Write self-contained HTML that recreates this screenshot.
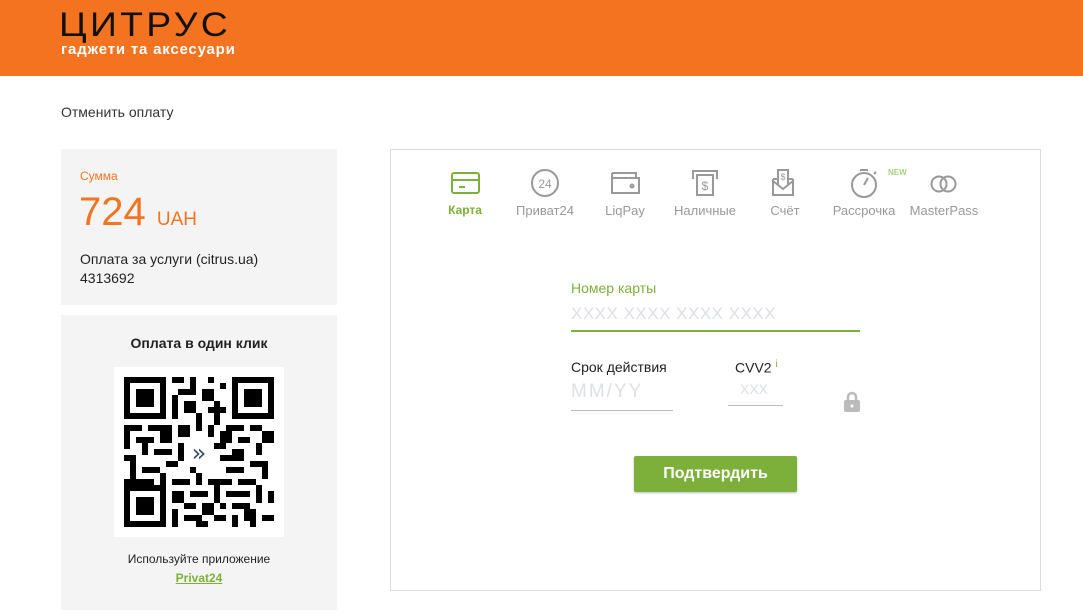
<!DOCTYPE html>
<html><head><meta charset="utf-8"><style>
body{margin:0;width:1083px;height:615px;background:#fff;font-family:"Liberation Sans","DejaVu Sans",sans-serif;position:relative;overflow:hidden;color:#222}
.hdr{position:absolute;left:0;top:0;width:1083px;height:76px;background:#f47321}
.a{position:absolute;white-space:nowrap}
.card{position:absolute;background:#f4f4f4}
.lab{position:absolute;top:203px;font-size:13px;color:#999;width:90px;text-align:center}
</style></head><body>
<div class="hdr"></div>
<div class="a" style="left:59px;top:6px;font-size:34px;letter-spacing:3px;color:#111;transform:scaleX(1.1);transform-origin:left">ЦИТРУС</div>
<div class="a" style="left:61px;top:41px;font-size:15px;color:#fff;font-weight:bold;letter-spacing:0.8px">гаджети та аксесуари</div>
<div class="a" style="left:61px;top:104px;font-size:14px;color:#333">Отменить оплату</div>

<div class="card" style="left:61px;top:149px;width:276px;height:156px"></div>
<div class="a" style="left:80px;top:169px;font-size:12px;color:#f47321">Сумма</div>
<div class="a" style="left:79px;top:190px;font-size:40px;color:#f47321">724 <span style="font-size:19px">UAH</span></div>
<div class="a" style="left:80px;top:250px;font-size:14px;color:#222;line-height:19px">Оплата за услуги (citrus.ua)<br>4313692</div>

<div class="card" style="left:61px;top:315px;width:276px;height:295px"></div>
<div class="a" style="left:61px;width:276px;text-align:center;top:335px;font-size:14px;font-weight:bold;color:#222">Оплата в один клик</div>
<div class="a" style="left:114px;top:367px;width:170px;height:170px;background:#fff"></div>
<svg class="a" style="left:124px;top:377px" width="150" height="150" viewBox="0 0 25 25" shape-rendering="crispEdges">
<g fill="#000">
<path d="M0 0h7v7h-7zM1 1v5h5v-5zM2 2h3v3h-3z" fill-rule="evenodd"/>
<path d="M18 0h7v7h-7zM19 1v5h5v-5zM20 2h3v3h-3z" fill-rule="evenodd"/>
<path d="M0 18h7v7h-7zM1 19v5h5v-5zM2 20h3v3h-3z" fill-rule="evenodd"/>
<rect x="8" y="0" width="2" height="1"/><rect x="11" y="0" width="1" height="2"/><rect x="14" y="0" width="1" height="1"/><rect x="16" y="1" width="1" height="1"/>
<rect x="9" y="2" width="3" height="1"/><rect x="13" y="2" width="2" height="2"/><rect x="8" y="3" width="1" height="4"/><rect x="10" y="4" width="2" height="2"/><rect x="14" y="5" width="3" height="1"/><rect x="12" y="6" width="1" height="3"/><rect x="15" y="4" width="1" height="4"/>
<rect x="0" y="8" width="3" height="1"/><rect x="4" y="8" width="4" height="1"/><rect x="9" y="8" width="2" height="2"/><rect x="14" y="8" width="1" height="2"/><rect x="17" y="8" width="3" height="1"/><rect x="21" y="8" width="2" height="1"/>
<rect x="0" y="9" width="1" height="3"/><rect x="2" y="10" width="3" height="1"/><rect x="6" y="9" width="2" height="2"/><rect x="10" y="10" width="3" height="1"/><rect x="16" y="9" width="2" height="2"/><rect x="19" y="10" width="2" height="1"/><rect x="23" y="9" width="2" height="2"/>
<rect x="3" y="11" width="1" height="2"/><rect x="5" y="12" width="3" height="1"/><rect x="9" y="11" width="1" height="3"/><rect x="11" y="12" width="2" height="1"/><rect x="14" y="11" width="3" height="1"/><rect x="18" y="12" width="2" height="1"/><rect x="22" y="11" width="1" height="2"/>
<rect x="0" y="13" width="2" height="1"/><rect x="11" y="13" width="1" height="3"/><rect x="13" y="13" width="1" height="1"/><rect x="16" y="13" width="4" height="1"/><rect x="21" y="14" width="3" height="1"/>
<rect x="1" y="14" width="1" height="3"/><rect x="3" y="15" width="3" height="1"/><rect x="7" y="14" width="2" height="1"/><rect x="17" y="15" width="3" height="1"/><rect x="23" y="15" width="1" height="2"/>
<rect x="0" y="17" width="5" height="1"/><rect x="6" y="16" width="1" height="2"/><rect x="8" y="17" width="3" height="1"/><rect x="12" y="16" width="1" height="2"/><rect x="14" y="17" width="4" height="1"/><rect x="19" y="17" width="3" height="1"/>
<rect x="8" y="19" width="2" height="2"/><rect x="11" y="19" width="3" height="1"/><rect x="15" y="18" width="1" height="3"/><rect x="17" y="19" width="4" height="1"/><rect x="22" y="18" width="1" height="3"/><rect x="24" y="19" width="1" height="2"/>
<rect x="10" y="21" width="2" height="1"/><rect x="13" y="21" width="2" height="2"/><rect x="16" y="21" width="1" height="1"/><rect x="18" y="21" width="3" height="1"/><rect x="8" y="22" width="1" height="3"/><rect x="10" y="23" width="3" height="1"/><rect x="15" y="23" width="2" height="1"/><rect x="18" y="23" width="1" height="2"/><rect x="20" y="22" width="2" height="2"/><rect x="23" y="23" width="2" height="1"/><rect x="12" y="24" width="2" height="1"/><rect x="21" y="24" width="1" height="1"/>
</g>
<rect x="10" y="10" width="5" height="5" fill="#fff"/>
<text x="12.5" y="14" font-size="4" text-anchor="middle" fill="#3d4a5c" font-family="DejaVu Sans">»</text>
</svg>
<div class="a" style="left:61px;width:276px;text-align:center;top:552px;font-size:12px;color:#222">Используйте приложение</div>
<div class="a" style="left:61px;width:276px;text-align:center;top:571px;font-size:12px;color:#7cb03a;font-weight:bold;text-decoration:underline">Privat24</div>

<div class="a" style="left:390px;top:149px;width:649px;height:440px;border:1px solid #dcdcdc"></div>

<svg class="a" style="left:440px;top:165px" width="560" height="36" fill="none" stroke-width="2">
<g stroke="#7cb03a"><rect x="12" y="8" width="27" height="20" rx="2"/><line x1="12" y1="15" x2="39" y2="15"/><line x1="19" y1="22" x2="25" y2="22"/></g>
<g stroke="#999"><circle cx="105" cy="18" r="13"/></g>
<text x="105" y="23" font-size="12" text-anchor="middle" fill="#999" font-family="Liberation Sans">24</text>
<g stroke="#999"><path d="M172 8h24v5M172 8v20h27v-15h-27"/><circle cx="192" cy="21" r="1.5"/>
<path d="M253 14v-8h24v8"/><rect x="257" y="10" width="16" height="20"/>
<path d="M333 14h4M349 14h4M333 14v16h20v-16M333 16l10 8l10-8"/><path d="M338 20v-15h10v15"/>
<circle cx="424" cy="20" r="12"/><path d="M424 20l4-7M420 5h8M434 9l2-2"/>
<circle cx="499" cy="19" r="7.5"/><circle cx="508" cy="19" r="7.5"/></g>
<text x="265" y="25" font-size="12" text-anchor="middle" fill="#999" font-family="Liberation Sans">$</text>
<text x="343" y="15" font-size="9" text-anchor="middle" fill="#999" font-family="Liberation Sans">$</text>
<text x="448" y="10" font-size="8" fill="#a9d27a" font-weight="bold" font-family="Liberation Sans">NEW</text>
</svg>
<div class="lab" style="left:420px;color:#7cb03a;font-weight:bold;font-size:12px">Карта</div>
<div class="lab" style="left:500px">Приват24</div>
<div class="lab" style="left:580px">LiqPay</div>
<div class="lab" style="left:660px">Наличные</div>
<div class="lab" style="left:740px">Счёт</div>
<div class="lab" style="left:819px">Рассрочка</div>
<div class="lab" style="left:899px">MasterPass</div>

<div class="a" style="left:571px;top:280px;font-size:14px;color:#7cb03a">Номер карты</div>
<div class="a" style="left:571px;top:304px;font-size:17px;color:#dde0e6;letter-spacing:0.5px">XXXX XXXX XXXX XXXX</div>
<div class="a" style="left:571px;top:330px;width:289px;height:2px;background:#7cb03a"></div>
<div class="a" style="left:571px;top:359px;font-size:14px;color:#222">Срок действия</div>
<div class="a" style="left:571px;top:381px;font-size:19px;color:#dde0e6;letter-spacing:2px">MM/YY</div>
<div class="a" style="left:571px;top:410px;width:102px;height:1px;background:#bbb"></div>
<div class="a" style="left:735px;top:359px;font-size:14px;color:#222">CVV2 <sup style="font-size:10px;color:#7cb03a">i</sup></div>
<div class="a" style="left:740px;top:381px;font-size:14px;color:#dde0e6">XXX</div>
<div class="a" style="left:728px;top:405px;width:55px;height:1px;background:#bbb"></div>
<svg class="a" style="left:843px;top:391px" width="18" height="22"><path d="M5 9v-3a4 4 0 0 1 8 0v3" stroke="#bbb" stroke-width="2.5" fill="none"/><rect x="1" y="9" width="16" height="12" rx="2" fill="#bbb"/><circle cx="9" cy="15" r="1.5" fill="#fff"/></svg>
<div class="a" style="left:634px;top:456px;width:163px;height:36px;background:#7cb03a;border-radius:2px;color:#fff;font-weight:bold;font-size:16px;text-align:center;line-height:36px;box-shadow:0 1px 2px rgba(0,0,0,.25)">Подтвердить</div>
</body></html>
